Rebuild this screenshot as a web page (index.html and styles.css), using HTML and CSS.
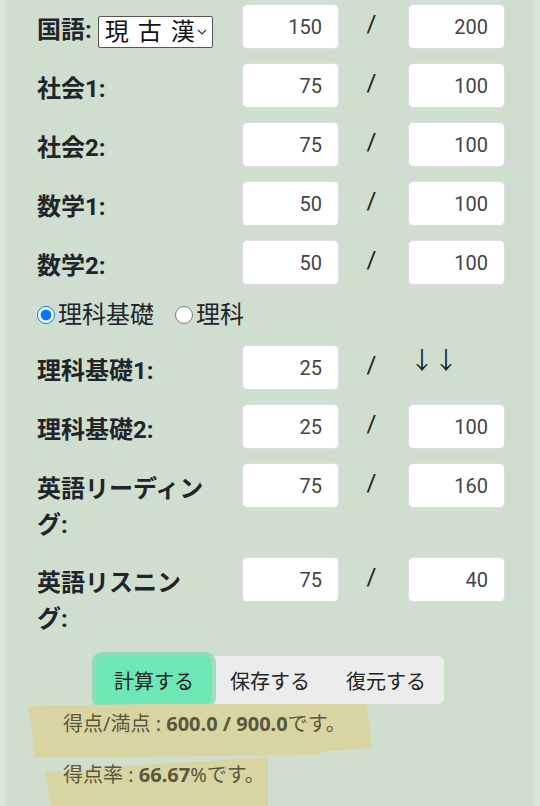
FILE: index.html
```html
<!DOCTYPE html>
<html lang="ja">
<head>
<meta charset="utf-8">
<link rel="stylesheet" href="styles.css">
</head>
<body>
<div class="page">
  <div class="form">
    <div class="row">
      <div class="label label-select">国語: <select class="kind"><option>現 古 漢</option></select></div>
      <input class="num" type="text" value="150">
      <div class="slash">/</div>
      <input class="num" type="text" value="200">
    </div>
    <div class="row">
      <div class="label">社会1:</div>
      <input class="num" type="text" value="75">
      <div class="slash">/</div>
      <input class="num" type="text" value="100">
    </div>
    <div class="row">
      <div class="label">社会2:</div>
      <input class="num" type="text" value="75">
      <div class="slash">/</div>
      <input class="num" type="text" value="100">
    </div>
    <div class="row">
      <div class="label">数学1:</div>
      <input class="num" type="text" value="50">
      <div class="slash">/</div>
      <input class="num" type="text" value="100">
    </div>
    <div class="row">
      <div class="label">数学2:</div>
      <input class="num" type="text" value="50">
      <div class="slash">/</div>
      <input class="num" type="text" value="100">
    </div>
    <div class="radios">
      <label class="radio"><input type="radio" name="sci" checked>理科基礎</label>
      <label class="radio"><input type="radio" name="sci">理科</label>
    </div>
    <div class="row">
      <div class="label">理科基礎1:</div>
      <input class="num" type="text" value="25">
      <div class="slash">/</div>
      <div class="arrows">↓↓</div>
    </div>
    <div class="row">
      <div class="label">理科基礎2:</div>
      <input class="num" type="text" value="25">
      <div class="slash">/</div>
      <input class="num" type="text" value="100">
    </div>
    <div class="row">
      <div class="label">英語リーディング:</div>
      <input class="num" type="text" value="75">
      <div class="slash">/</div>
      <input class="num" type="text" value="160">
    </div>
    <div class="row">
      <div class="label">英語リスニング:</div>
      <input class="num" type="text" value="75">
      <div class="slash">/</div>
      <input class="num" type="text" value="40">
    </div>
  </div>

  <div class="actions">
    <div class="btn-group">
      <button class="btn btn-calc">計算する</button>
      <button class="btn">保存する</button>
      <button class="btn">復元する</button>
    </div>
  </div>

  <div class="results">
    <svg class="marker" width="400" height="110" viewBox="0 0 400 110">
      <polygon points="22,2 150,0 324,-3 352,-4 361,2 366,44 314,48 315,51 29,54" fill="#d8d5a2"/>
      <polygon points="39,68 150,60 262,53 262,110 46,110" fill="#d8d5a2"/>
    </svg>
    <p class="line">得点/満点 : <b>600.0 / 900.0</b>です。</p>
    <p class="line">得点率 : <b>66.67</b>%です。</p>
  </div>
</div>
</body>
</html>
```

FILE: styles.css
```css
html, body {
  margin: 0;
  padding: 0;
  height: 806px;
  overflow: hidden;
  background: #dae5da;
}

.page {
  margin: 0 6px;
  height: 806px;
  background: #d0ded0;
  font-family: Roboto, "Noto Sans CJK JP", sans-serif;
  color: #212529;
}

.form {
  display: flex;
  flex-direction: column;
  gap: 14px;
  padding: 4px 0 0 31px;
}

.row {
  display: grid;
  grid-template-columns: 205px 97px 69px 97px;
  align-items: start;
}

.label {
  width: 170px;
  padding-top: 8px;
  font-size: 24px;
  font-weight: 700;
  line-height: 36px;
}

.label-select {
  white-space: nowrap;
}

.kind {
  appearance: none;
  -webkit-appearance: none;
  height: 32px;
  width: 115px;
  margin: 0;
  padding: 0 18px 0 6px;
  border: 1px solid #555;
  border-radius: 2px;
  background: #fff url("data:image/svg+xml,%3Csvg xmlns='http://www.w3.org/2000/svg' width='10' height='6' viewBox='0 0 10 6'%3E%3Cpath d='M1 1l4 4 4-4' fill='none' stroke='%23333' stroke-width='1.2'/%3E%3C/svg%3E") no-repeat right 5px center;
  font-family: Roboto, "Noto Sans CJK JP", sans-serif;
  font-size: 24px;
  font-weight: 400;
  word-spacing: 3px;
  color: #111;
  vertical-align: middle;
  line-height: 30px;
}

.num {
  box-sizing: border-box;
  width: 97px;
  height: 45px;
  margin: 0;
  padding: 0 16px;
  border: 1px solid #dddde5;
  border-radius: 5px;
  background: #fff;
  font-family: Roboto, sans-serif;
  font-size: 20px;
  color: #444;
  text-align: right;
}

.slash {
  padding: 2px 4px 0 0;
  font-size: 24px;
  line-height: 36px;
  text-align: center;
  color: #222;
}

.arrows {
  padding-left: 2px;
  font-family: "Noto Sans CJK JP", sans-serif;
  font-size: 24px;
  line-height: 28px;
  color: #222;
}

.radios {
  display: flex;
  align-items: center;
  gap: 21px;
  height: 32px;
}

.radio {
  display: flex;
  align-items: center;
  gap: 3px;
  font-size: 24px;
  line-height: 32px;
}

.radio input {
  width: 18px;
  height: 18px;
  margin: 0;
}

.actions {
  display: flex;
  justify-content: center;
  margin-top: 19px;
}

.btn-group {
  display: flex;
  background: #ececec;
  border-radius: 6px;
}

.btn {
  height: 48px;
  padding: 0 18px;
  border: none;
  border-radius: 6px;
  background: transparent;
  font-family: "Noto Sans CJK JP", sans-serif;
  font-size: 20px;
  color: #222;
}

.btn-calc {
  background: #6ee7b7;
  box-shadow: 0 0 0 4px rgba(112, 214, 172, 0.6);
}

.results {
  position: relative;
  padding: 5px 0 0 57px;
}

.marker {
  position: absolute;
  left: 0;
  top: 0;
  z-index: 0;
}

.line {
  position: relative;
  z-index: 1;
  margin: 0 0 21px;
  font-family: "Noto Sans", "Noto Sans CJK JP", sans-serif;
  font-size: 20px;
  line-height: 30px;
  color: #5a573f;
}

.line b {
  font-weight: 700;
}
```
